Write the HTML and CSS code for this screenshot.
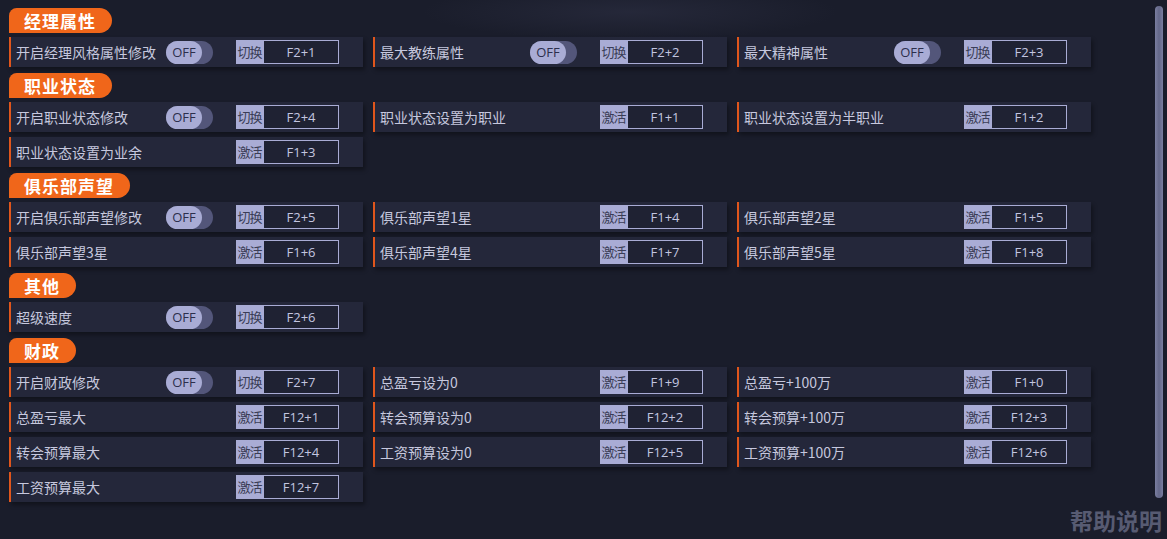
FILE: index.html
```html
<!DOCTYPE html>
<html lang="zh-CN">
<head>
    <meta charset="UTF-8">
    <meta name="viewport" content="width=device-width, initial-scale=1.0">
    <title>修改器</title>
    <link rel="stylesheet" href="styles.css">
</head>
<body>
    <div class="backdrop"></div>
    <div class="container">
        <div class="section-title">经理属性</div>
        <div class="grid">
            <div class="row"><span class="label">开启经理风格属性修改</span><span class="toggle"><span class="knob">OFF</span></span><span class="key"><span class="tag">切换</span><span class="combo">F2+1</span></span></div>
            <div class="row"><span class="label">最大教练属性</span><span class="toggle"><span class="knob">OFF</span></span><span class="key"><span class="tag">切换</span><span class="combo">F2+2</span></span></div>
            <div class="row"><span class="label">最大精神属性</span><span class="toggle"><span class="knob">OFF</span></span><span class="key"><span class="tag">切换</span><span class="combo">F2+3</span></span></div>
        </div>

        <div class="section-title">职业状态</div>
        <div class="grid">
            <div class="row"><span class="label">开启职业状态修改</span><span class="toggle"><span class="knob">OFF</span></span><span class="key"><span class="tag">切换</span><span class="combo">F2+4</span></span></div>
            <div class="row"><span class="label">职业状态设置为职业</span><span class="key"><span class="tag">激活</span><span class="combo">F1+1</span></span></div>
            <div class="row"><span class="label">职业状态设置为半职业</span><span class="key"><span class="tag">激活</span><span class="combo">F1+2</span></span></div>
            <div class="row"><span class="label">职业状态设置为业余</span><span class="key"><span class="tag">激活</span><span class="combo">F1+3</span></span></div>
        </div>

        <div class="section-title">俱乐部声望</div>
        <div class="grid">
            <div class="row"><span class="label">开启俱乐部声望修改</span><span class="toggle"><span class="knob">OFF</span></span><span class="key"><span class="tag">切换</span><span class="combo">F2+5</span></span></div>
            <div class="row"><span class="label">俱乐部声望1星</span><span class="key"><span class="tag">激活</span><span class="combo">F1+4</span></span></div>
            <div class="row"><span class="label">俱乐部声望2星</span><span class="key"><span class="tag">激活</span><span class="combo">F1+5</span></span></div>
            <div class="row"><span class="label">俱乐部声望3星</span><span class="key"><span class="tag">激活</span><span class="combo">F1+6</span></span></div>
            <div class="row"><span class="label">俱乐部声望4星</span><span class="key"><span class="tag">激活</span><span class="combo">F1+7</span></span></div>
            <div class="row"><span class="label">俱乐部声望5星</span><span class="key"><span class="tag">激活</span><span class="combo">F1+8</span></span></div>
        </div>

        <div class="section-title">其他</div>
        <div class="grid">
            <div class="row"><span class="label">超级速度</span><span class="toggle"><span class="knob">OFF</span></span><span class="key"><span class="tag">切换</span><span class="combo">F2+6</span></span></div>
        </div>

        <div class="section-title">财政</div>
        <div class="grid">
            <div class="row"><span class="label">开启财政修改</span><span class="toggle"><span class="knob">OFF</span></span><span class="key"><span class="tag">切换</span><span class="combo">F2+7</span></span></div>
            <div class="row"><span class="label">总盈亏设为0</span><span class="key"><span class="tag">激活</span><span class="combo">F1+9</span></span></div>
            <div class="row"><span class="label">总盈亏+100万</span><span class="key"><span class="tag">激活</span><span class="combo">F1+0</span></span></div>
            <div class="row"><span class="label">总盈亏最大</span><span class="key"><span class="tag">激活</span><span class="combo">F12+1</span></span></div>
            <div class="row"><span class="label">转会预算设为0</span><span class="key"><span class="tag">激活</span><span class="combo">F12+2</span></span></div>
            <div class="row"><span class="label">转会预算+100万</span><span class="key"><span class="tag">激活</span><span class="combo">F12+3</span></span></div>
            <div class="row"><span class="label">转会预算最大</span><span class="key"><span class="tag">激活</span><span class="combo">F12+4</span></span></div>
            <div class="row"><span class="label">工资预算设为0</span><span class="key"><span class="tag">激活</span><span class="combo">F12+5</span></span></div>
            <div class="row"><span class="label">工资预算+100万</span><span class="key"><span class="tag">激活</span><span class="combo">F12+6</span></span></div>
            <div class="row"><span class="label">工资预算最大</span><span class="key"><span class="tag">激活</span><span class="combo">F12+7</span></span></div>
        </div>
    </div>

    <div class="scrollbar"></div>
    <div class="help">帮助说明</div>
</body>
</html>
```

FILE: styles.css
```css
html, body {
    height: 100%;
}
body {
    margin: 0;
    background-color: #1a1d2b;
    font-family: "Noto Sans CJK SC", "Noto Sans", sans-serif;
    color: #c9cbe0;
    overflow: hidden;
    position: relative;
}
.backdrop {
    position: absolute;
    left: 420px;
    top: 0;
    width: 420px;
    height: 40px;
    background: radial-gradient(ellipse at 50% 30%, rgba(70,72,100,0.25), rgba(26,29,43,0) 70%);
}
.container {
    position: relative;
    padding: 8px 0 0 9px;
}
.section-title {
    display: inline-block;
    height: 25px;
    line-height: 25px;
    padding: 0 16px 0 15px;
    background-color: #f0661a;
    color: #fff;
    font-size: 17px;
    font-weight: bold;
    letter-spacing: 1px;
    border-radius: 8px 13px 13px 0;
    margin-bottom: 4px;
}
.grid {
    display: grid;
    grid-template-columns: repeat(3, 354px);
    column-gap: 10px;
    row-gap: 5px;
    margin-bottom: 6px;
}
.row {
    height: 30px;
    box-sizing: border-box;
    background-color: #24273a;
    border-left: 2px solid #e0561c;
    padding-left: 5px;
    display: grid;
    grid-template-columns: 150px 70px 103px;
    align-items: center;
    box-shadow: 2px 3px 4px rgba(0,0,0,0.35);
}
.label {
    grid-column: 1;
    font-size: 14px;
    white-space: nowrap;
    color: #c6c8de;
}
.toggle {
    grid-column: 2;
    width: 47px;
    height: 23px;
    border-radius: 12px;
    background-color: #53567a;
    display: flex;
}
.knob {
    width: 36px;
    height: 23px;
    border-radius: 12px;
    background-color: #a9acd5;
    color: #2c2f4c;
    font-family: "Open Sans", "Liberation Sans", sans-serif;
    font-size: 13px;
    line-height: 23px;
    text-align: center;
}
.key {
    grid-column: 3;
    display: flex;
    height: 24px;
}
.tag {
    width: 27px;
    background-color: #a9acd5;
    color: #3a3d56;
    font-size: 13px;
    line-height: 24px;
    letter-spacing: -1px;
    text-align: center;
    overflow: hidden;
}
.combo {
    flex: 1;
    border: 1px solid #a9acd5;
    background-color: #1f2233;
    color: #c3c6e0;
    font-family: "Open Sans", "Liberation Sans", sans-serif;
    font-size: 13px;
    line-height: 22px;
    text-align: center;
}
.scrollbar {
    position: absolute;
    right: 4px;
    top: 6px;
    width: 8px;
    height: 492px;
    border-radius: 4px;
    background: linear-gradient(90deg, #7a7ea0, #646889 50%, #7a7ea0);
}
.help {
    position: absolute;
    right: 5px;
    bottom: 2px;
    font-size: 23px;
    font-weight: bold;
    color: #575b72;
}
```
